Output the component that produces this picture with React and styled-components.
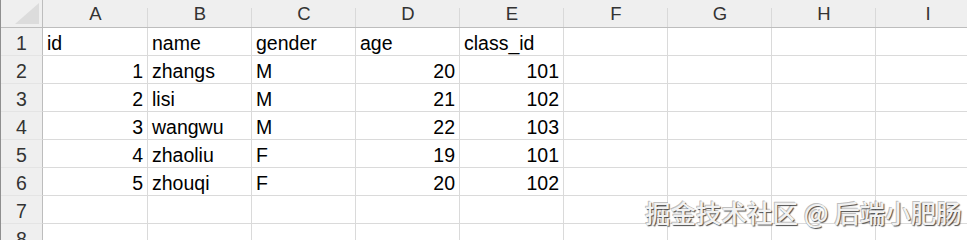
import React from 'react';
import styled, { createGlobalStyle } from 'styled-components';

const GlobalStyle = createGlobalStyle`
  html, body {
    margin: 0;
    padding: 0;
    background: #ffffff;
    overflow: hidden;
  }
  body {
    font-family: 'Liberation Sans', Arial, sans-serif;
  }
`;

const Page = styled.div`
  position: relative;
  width: 967px;
  height: 240px;
  overflow: hidden;
  border-left: 1px solid #8f8f8f;
  box-sizing: border-box;
`;

const Sheet = styled.div`
  display: grid;
  grid-template-columns: 42px 105px repeat(8, 104px);
  grid-auto-rows: 28px;
`;

const Corner = styled.div`
  position: relative;
  background: #efefef;
  border-right: 1px solid #bdbdbd;
  border-bottom: 1px solid #bdbdbd;
  box-sizing: border-box;

  &::after {
    content: '';
    position: absolute;
    right: 3px;
    bottom: 3px;
    width: 24px;
    height: 21px;
    background: #dcdcdc;
    clip-path: polygon(100% 0, 100% 100%, 0 100%);
  }
`;

const ColHead = styled.div`
  position: relative;
  background: #efefef;
  border-bottom: 1px solid #bdbdbd;
  box-sizing: border-box;
  text-align: center;
  font-size: 18.5px;
  line-height: 28px;
  color: #333333;

  &::after {
    content: '';
    position: absolute;
    right: 0;
    top: 8px;
    bottom: 0;
    width: 1px;
    background: #d9d9d9;
  }
`;

const RowHead = styled.div`
  background: #efefef;
  border-right: 1px solid #bdbdbd;
  border-bottom: 1px solid #e4e4e4;
  box-sizing: border-box;
  text-align: center;
  font-size: 19.5px;
  line-height: 31px;
  color: #333333;
  overflow: hidden;
`;

const Cell = styled.div`
  border-right: 1px solid #dadada;
  border-bottom: 1px solid #dadada;
  box-sizing: border-box;
  padding: 0 4px;
  text-align: ${(p) => (p.$num ? 'right' : 'left')};
  font-size: 19.5px;
  line-height: 31px;
  color: #000000;
  white-space: nowrap;
  overflow: hidden;
`;

const Watermark = styled.div`
  position: absolute;
  left: 644px;
  top: 199px;
  font-family: 'Noto Sans CJK SC', 'Liberation Sans', sans-serif;
  font-size: 25.5px;
  line-height: 26px;
  font-weight: 500;
  color: #f2f2f2;
  white-space: nowrap;
  text-shadow: 1px 1px 1px rgba(0, 0, 0, 0.7), -1px -1px 0 rgba(110, 110, 110, 0.45);
  pointer-events: none;
`;

const columns = ['A', 'B', 'C', 'D', 'E', 'F', 'G', 'H', 'I'];

const rows = [
  [{ v: 'id' }, { v: 'name' }, { v: 'gender' }, { v: 'age' }, { v: 'class_id' }],
  [{ v: '1', n: true }, { v: 'zhangs' }, { v: 'M' }, { v: '20', n: true }, { v: '101', n: true }],
  [{ v: '2', n: true }, { v: 'lisi' }, { v: 'M' }, { v: '21', n: true }, { v: '102', n: true }],
  [{ v: '3', n: true }, { v: 'wangwu' }, { v: 'M' }, { v: '22', n: true }, { v: '103', n: true }],
  [{ v: '4', n: true }, { v: 'zhaoliu' }, { v: 'F' }, { v: '19', n: true }, { v: '101', n: true }],
  [{ v: '5', n: true }, { v: 'zhouqi' }, { v: 'F' }, { v: '20', n: true }, { v: '102', n: true }],
  [],
  [],
];

const App = () => {
  return (
    <Page>
      <GlobalStyle />
      <Sheet>
        <Corner />
        {columns.map((c) => (
          <ColHead key={c}>{c}</ColHead>
        ))}
        {rows.map((row, r) => (
          <React.Fragment key={r}>
            <RowHead>{r + 1}</RowHead>
            {columns.map((c, i) => {
              const cell = row[i];
              return (
                <Cell key={c} $num={cell && cell.n}>
                  {cell ? cell.v : ''}
                </Cell>
              );
            })}
          </React.Fragment>
        ))}
      </Sheet>
      <Watermark>掘金技术社区 @ 后端小肥肠</Watermark>
    </Page>
  );
};

export default App;
